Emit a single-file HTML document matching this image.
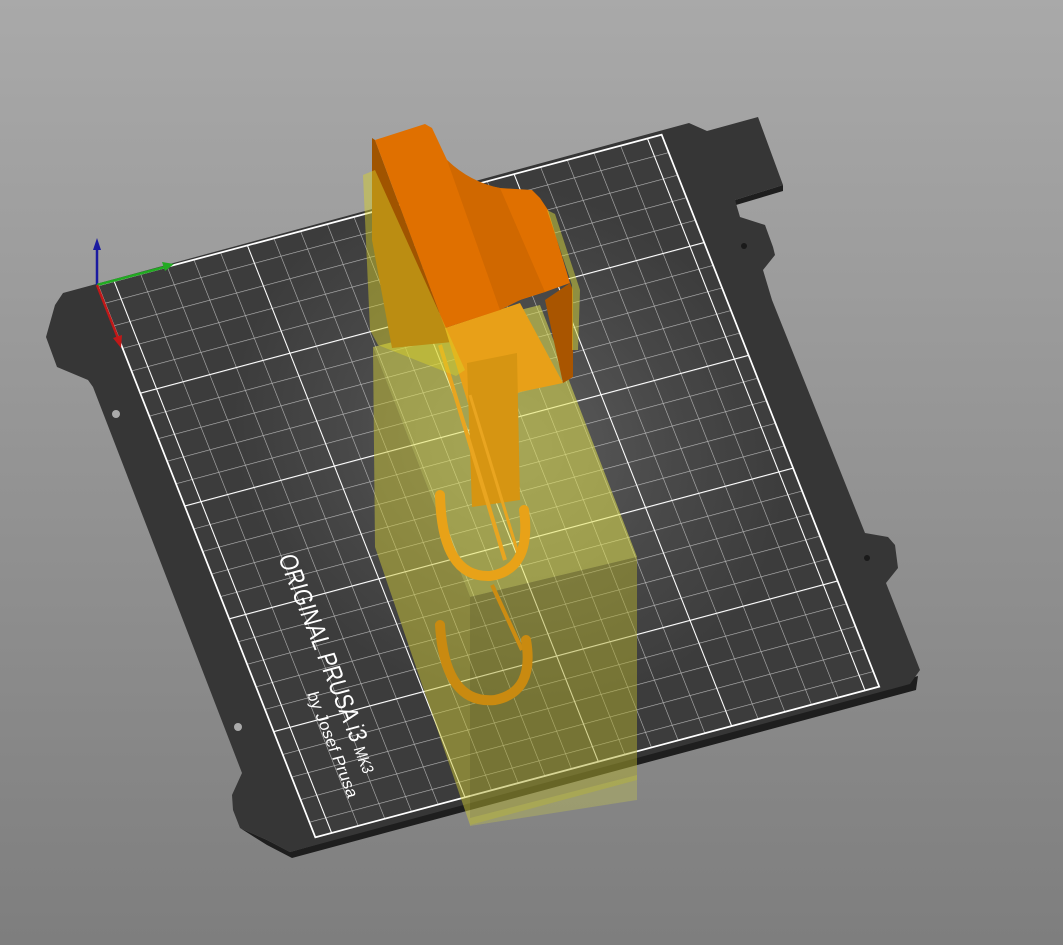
<!DOCTYPE html>
<html><head><meta charset="utf-8"><style>
html,body{margin:0;padding:0;width:1063px;height:945px;overflow:hidden;background:#959595}
svg{display:block}
</style></head><body>
<svg width="1063" height="945" viewBox="0 0 1063 945" xmlns="http://www.w3.org/2000/svg">
<defs>
<linearGradient id="bg" x1="0" y1="0" x2="0" y2="1">
<stop offset="0" stop-color="#a9a9a9"/><stop offset="1" stop-color="#7e7e7e"/>
</linearGradient>
<radialGradient id="surf" cx="560" cy="440" r="460" gradientUnits="userSpaceOnUse">
<stop offset="0" stop-color="#5e5e5e"/><stop offset="0.6" stop-color="#484848"/><stop offset="1" stop-color="#3c3c3c"/>
</radialGradient>
<pattern id="minor" patternUnits="userSpaceOnUse" x="29" y="32.8" width="47.2" height="40.8">
<line x1="0" y1="0" x2="0" y2="40.8" stroke="#d8d8d8" stroke-width="2"/>
<line x1="0" y1="0" x2="47.2" y2="0" stroke="#d8d8d8" stroke-width="2"/>
</pattern>
<pattern id="major" patternUnits="userSpaceOnUse" x="29" y="195" width="236" height="204">
<line x1="0" y1="0" x2="0" y2="204" stroke="#fff" stroke-width="3.5"/>
<line x1="0" y1="0" x2="236" y2="0" stroke="#fff" stroke-width="3.5"/>
</pattern>
</defs>
<rect width="1063" height="945" fill="url(#bg)"/>

<polygon points="240,828 267,845 292,858 916,690 918,676 290,852 267,840" fill="#1e1e1e"/>
<polygon points="783,185 783,191 736,205 735,200" fill="#1e1e1e"/>
<polygon fill="#363636" points="63,293 689,123 707,131 758,117 783,185 735,200 740,217 765,225 773,247 775,255 763,270 772,300 865,533 888,537 895,545 898,568 886,583 920,670 910,684 290,852 267,840 240,828 233,810 232,795 242,773 93,387 88,380 57,367 46,337 55,305"/>
<circle cx="116" cy="414" r="4" fill="#aaa"/>
<circle cx="238" cy="727" r="4" fill="#aaa"/>
<circle cx="744" cy="246" r="3" fill="#1a1a1a"/>
<circle cx="867" cy="558" r="3" fill="#1a1a1a"/>

<g transform="matrix(0.565,-0.151,0.218,0.553,97,285)">
<rect x="0" y="0" width="1000" height="1000" fill="url(#surf)"/>
<rect x="0" y="0" width="1000" height="1000" fill="url(#minor)" opacity="0.8"/>
<rect x="0" y="0" width="1000" height="1000" fill="url(#major)"/>
<rect x="1" y="1" width="998" height="998" fill="none" stroke="#fff" stroke-width="3"/>
<text transform="translate(118,524) rotate(90)" font-family="Liberation Sans, sans-serif" font-size="44" fill="#fff" textLength="393" lengthAdjust="spacingAndGlyphs">ORIGINAL PRUSA i3  <tspan font-size="28">MK3</tspan></text>
<text transform="translate(78,760) rotate(90)" font-family="Liberation Sans, sans-serif" font-size="28" fill="#fff" textLength="190" lengthAdjust="spacingAndGlyphs">by Josef Prusa</text>
</g>

<line x1="97" y1="285" x2="97" y2="248" stroke="#1a1aa0" stroke-width="2.5"/>
<polygon points="97,238 93,250 101,250" fill="#1a1aa0"/>
<line x1="97" y1="285" x2="165" y2="267" stroke="#22aa22" stroke-width="2.5"/>
<polygon points="174,264 162,262 165,271" fill="#22aa22"/>
<line x1="97" y1="285" x2="118" y2="338" stroke="#c01818" stroke-width="2.5"/>
<polygon points="121,348 113,338 122,335" fill="#c01818"/>

<polygon points="373,347 470,597 470,825 375,547" fill="rgba(205,200,55,0.5)"/>
<polygon points="470,597 637,557 637,780 470,825" fill="rgba(175,172,45,0.5)"/>
<polygon points="373,347 540,305 637,557 470,597" fill="rgba(225,225,80,0.55)"/>

<polygon points="372,138 375,140 445,328 452,342 392,348 372,240" fill="#a05400"/>
<polygon points="445,328 520,303 563,383 520,392 505,400 470,410" fill="#e8a018"/>
<polygon points="467,363 517,353 520,500 472,507" fill="#d69512"/>
<polygon points="375,140 425,124 432,128 447,160 470,182 500,188 532,190 540,198 548,210 570,283 545,292 520,300 500,310 445,328" fill="#e07000"/>
<path d="M447,160 Q470,182 500,188 L545,292 Q520,298 500,310 Z" fill="#d06800"/>
<polygon points="570,283 573,290 573,377 563,383 545,300" fill="#a95500"/>

<line x1="440" y1="345" x2="505" y2="560" stroke="#e9a520" stroke-width="4"/>
<line x1="470" y1="395" x2="520" y2="560" stroke="#e9a520" stroke-width="3"/>
<path d="M440,495 Q442,578 490,576 Q532,570 524,510" fill="none" stroke="#e8a218" stroke-width="10" stroke-linecap="round"/>
<path d="M492,585 L522,650" stroke="#cc8c12" stroke-width="4"/>
<path d="M440,625 Q445,705 495,700 Q535,692 526,640" fill="none" stroke="#c98a10" stroke-width="10" stroke-linecap="round"/>

<polygon points="363,175 375,170 465,370 456,376 378,345 370,330" fill="rgba(220,210,40,0.45)"/>
<polygon points="547,210 555,214 580,290 578,350 572,350 572,285" fill="rgba(215,215,60,0.5)"/>
<polygon points="470,818 637,775 637,800 470,826" fill="rgba(190,190,80,0.4)"/>
</svg>
</body></html>
